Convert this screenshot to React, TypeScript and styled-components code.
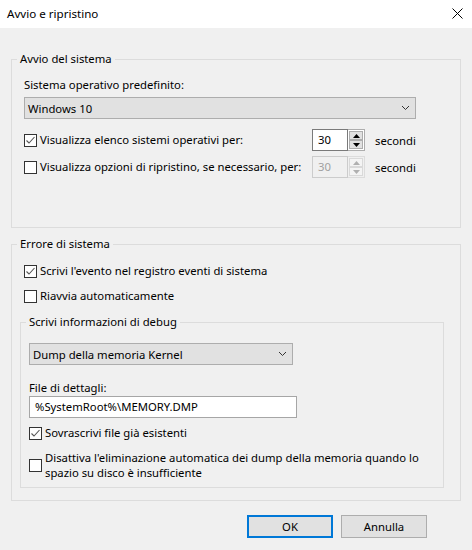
import React from "react";
import styled, { createGlobalStyle } from "styled-components";

const FONT = `"Segoe UI", "Noto Sans", sans-serif`;

const Global = createGlobalStyle`
  html, body { margin: 0; padding: 0; background: #f0f0f0; }
  body { font-family: ${FONT}; font-size: 11.3px; color: #000; }
  * { box-sizing: border-box; }
`;

const Window = styled.div`
  width: 472px;
  height: 550px;
  display: flex;
  flex-direction: column;
  background: #f0f0f0;
  overflow: hidden;
`;

const TitleBar = styled.div`
  height: 28px;
  flex: none;
  background: #ffffff;
  display: flex;
  align-items: center;
  justify-content: space-between;
  padding: 0 9px 2px 7px;
  font-size: 11.6px;
`;

const Content = styled.div`
  padding-top: 23px;
  display: flex;
  flex-direction: column;
`;

const Group = styled.fieldset<{ $mt?: number; $ml?: number; $w?: number }>`
  margin: ${(p) => p.$mt ?? 0}px 0 0 ${(p) => p.$ml ?? 11}px;
  width: ${(p) => p.$w ?? 450}px;
  padding: 0;
  border: 1px solid #dcdcdc;
  min-width: 0;
`;

const Legend = styled.legend`
  margin-left: 5px;
  padding: 0 3px;
  line-height: 16px;
`;

const GroupBody = styled.div<{ $pad: string }>`
  padding: ${(p) => p.$pad};
  display: flex;
  flex-direction: column;
`;

const FieldLabel = styled.div<{ $mt?: number }>`
  line-height: 16px;
  margin-top: ${(p) => p.$mt ?? 0}px;
`;

const Combo = styled.div<{ $w: number; $mt?: number }>`
  margin-top: ${(p) => p.$mt ?? 0}px;
  width: ${(p) => p.$w}px;
  height: 22px;
  background: #e1e1e1;
  border: 1px solid #adadad;
  display: flex;
  align-items: center;
  justify-content: space-between;
  padding: 0 5px 0 3px;
`;

const Row = styled.div<{ $mt?: number }>`
  display: flex;
  align-items: center;
  height: 22px;
  margin-top: ${(p) => p.$mt ?? 0}px;
`;

const CheckRow = styled.div<{ $mt?: number; $lh?: number; $w?: number }>`
  display: flex;
  align-items: center;
  gap: 3px;
  line-height: ${(p) => p.$lh ?? 16}px;
  margin-top: ${(p) => p.$mt ?? 0}px;
  ${(p) => (p.$w ? `width: ${p.$w}px; flex: none;` : "")}
`;

const Box = styled.span`
  width: 13px;
  height: 13px;
  flex: none;
  border: 1px solid #333333;
  background: #ffffff;
  display: flex;
  align-items: center;
  justify-content: center;
`;

const Spinner = styled.div`
  display: flex;
  height: 22px;
  flex: none;
`;

const SpinInput = styled.div<{ $disabled?: boolean }>`
  width: 36px;
  height: 22px;
  border: 1px solid ${(p) => (p.$disabled ? "#cccccc" : "#7a7a7a")};
  background: ${(p) => (p.$disabled ? "#f0f0f0" : "#ffffff")};
  color: ${(p) => (p.$disabled ? "#a0a0a0" : "#000000")};
  padding-left: 5px;
  line-height: 20px;
`;

const SpinButtons = styled.div<{ $disabled?: boolean }>`
  width: 17px;
  height: 22px;
  display: flex;
  flex-direction: column;
  border: 1px solid ${(p) => (p.$disabled ? "#dcdcdc" : "#adadad")};
  border-left: none;
  background: ${(p) => (p.$disabled ? "#f0f0f0" : "#ffffff")};
  padding: 1px;
  gap: 0px;
`;

const SpinBtn = styled.div<{ $disabled?: boolean }>`
  flex: 1;
  border: 1px solid ${(p) => (p.$disabled ? "#d9d9d9" : "#adadad")};
  background: ${(p) => (p.$disabled ? "#f4f4f4" : "#e1e1e1")};
  display: flex;
  align-items: center;
  justify-content: center;
`;

const Suffix = styled.span`
  margin-left: 10px;
`;

const TextBox = styled.div<{ $w: number }>`
  width: ${(p) => p.$w}px;
  height: 22px;
  background: #ffffff;
  border: 1px solid #a6a6a6;
  padding-left: 5px;
  line-height: 20px;
`;

const Footer = styled.div`
  display: flex;
  justify-content: flex-end;
  gap: 8px;
  margin-top: 14px;
  padding-right: 45px;
`;

const Button = styled.button<{ $default?: boolean }>`
  width: 86px;
  height: 23px;
  margin: 0;
  padding: 0;
  font-family: ${FONT};
  font-size: 11.3px;
  color: #000;
  background: #e1e1e1;
  border: ${(p) => (p.$default ? "2px solid #0078d7" : "1px solid #adadad")};
`;

const Chevron = () => (
  <svg width="9" height="6" viewBox="0 0 9 6">
    <path d="M1 1 L4.5 4.5 L8 1" fill="none" stroke="#333" strokeWidth="1" />
  </svg>
);

const Check = () => (
  <svg width="11" height="11" viewBox="0 0 11 11">
    <path d="M1.5 5.5 L4 8 L9.5 2" fill="none" stroke="#555" strokeWidth="1.1" />
  </svg>
);

const Triangle = ({ up, disabled }: { up?: boolean; disabled?: boolean }) => (
  <svg width="7" height="4" viewBox="0 0 7 4">
    <path d={up ? "M0 4 L3.5 0 L7 4 Z" : "M0 0 L3.5 4 L7 0 Z"} fill={disabled ? "#b0b0b0" : "#000"} />
  </svg>
);

const CheckBox = ({ checked }: { checked?: boolean }) => <Box>{checked ? <Check /> : null}</Box>;

const Spin = ({ value, disabled }: { value: string; disabled?: boolean }) => (
  <Spinner>
    <SpinInput $disabled={disabled}>{value}</SpinInput>
    <SpinButtons $disabled={disabled}>
      <SpinBtn $disabled={disabled}>
        <Triangle up disabled={disabled} />
      </SpinBtn>
      <SpinBtn $disabled={disabled}>
        <Triangle disabled={disabled} />
      </SpinBtn>
    </SpinButtons>
  </Spinner>
);

export default function App() {
  return (
    <Window>
      <Global />
      <TitleBar>
        <span>Avvio e ripristino</span>
        <svg width="11" height="11" viewBox="0 0 11 11">
          <path d="M0.5 0.5 L10.5 10.5 M10.5 0.5 L0.5 10.5" stroke="#000" strokeWidth="1" />
        </svg>
      </TitleBar>
      <Content>
        <Group>
          <Legend>Avvio del sistema</Legend>
          <GroupBody $pad="10px 12px 49px 12px">
            <FieldLabel>Sistema operativo predefinito:</FieldLabel>
            <Combo $w={392} $mt={4}>
              <span>Windows 10</span>
              <Chevron />
            </Combo>
            <Row $mt={10}>
              <CheckRow $w={288}>
                <CheckBox checked />
                <span>Visualizza elenco sistemi operativi per:</span>
              </CheckRow>
              <Spin value="30" />
              <Suffix>secondi</Suffix>
            </Row>
            <Row $mt={5}>
              <CheckRow $w={288}>
                <CheckBox />
                <span>Visualizza opzioni di ripristino, se necessario, per:</span>
              </CheckRow>
              <Spin value="30" disabled />
              <Suffix>secondi</Suffix>
            </Row>
          </GroupBody>
        </Group>

        <Group $mt={8}>
          <Legend>Errore di sistema</Legend>
          <GroupBody $pad="11px 16px 12px 12px">
            <CheckRow>
              <CheckBox checked />
              <span>Scrivi l'evento nel registro eventi di sistema</span>
            </CheckRow>
            <CheckRow $mt={9}>
              <CheckBox />
              <span>Riavvia automaticamente</span>
            </CheckRow>
            <Group $mt={10} $ml={-4} $w={424}>
              <Legend>Scrivi informazioni di debug</Legend>
              <GroupBody $pad="13px 8px 7px 8px">
                <Combo $w={264}>
                  <span>Dump della memoria Kernel</span>
                  <Chevron />
                </Combo>
                <FieldLabel $mt={15}>File di dettagli:</FieldLabel>
                <TextBox $w={268}>%SystemRoot%\MEMORY.DMP</TextBox>
                <CheckRow $mt={7}>
                  <CheckBox checked />
                  <span>Sovrascrivi file già esistenti</span>
                </CheckRow>
                <CheckRow $mt={9} $lh={15}>
                  <CheckBox />
                  <span>
                    Disattiva l'eliminazione automatica dei dump della memoria quando lo
                    <br />
                    spazio su disco è insufficiente
                  </span>
                </CheckRow>
              </GroupBody>
            </Group>
          </GroupBody>
        </Group>

        <Footer>
          <Button $default>OK</Button>
          <Button>Annulla</Button>
        </Footer>
      </Content>
    </Window>
  );
}
